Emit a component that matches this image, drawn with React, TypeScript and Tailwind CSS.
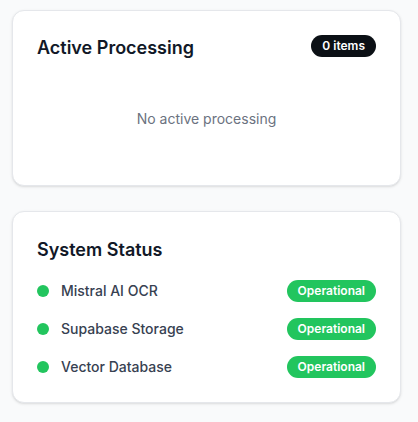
const services = ['Mistral AI OCR', 'Supabase Storage', 'Vector Database'];

function Card({ children }: { children: React.ReactNode }) {
  return (
    <div className="rounded-xl border border-[#e5e7eb] bg-white p-6 shadow-sm">{children}</div>
  );
}

export default function App() {
  return (
    <div
      className="min-h-screen bg-[#f9fafb] pt-[10px] pb-5"
      style={{ fontFamily: 'Inter, "Noto Sans", sans-serif' }}
    >
      <div className="ml-3 w-[389px] flex flex-col gap-[25px]">
        <Card>
          <div className="flex items-center justify-between mb-5">
            <h2 className="text-lg leading-7 font-semibold text-[#111827] -mt-[1px] -mb-[5px]">Active Processing</h2>
            <span className="rounded-full border border-transparent bg-[#0b1015] px-2.5 py-0.5 text-xs font-semibold text-white">
              0 items
            </span>
          </div>
          <div className="py-8 text-center text-sm leading-5 text-[#6b7280]">No active processing</div>
        </Card>

        <Card>
          <h2 className="text-lg leading-7 font-semibold text-[#111827] mb-4">System Status</h2>
          <div className="flex flex-col gap-4">
            {services.map((name) => (
              <div key={name} className="flex items-center justify-between">
                <div className="flex items-center gap-3">
                  <span className="h-3 w-3 rounded-full bg-[#22c55e]" />
                  <span className="text-sm leading-5 font-medium text-[#374151]">{name}</span>
                </div>
                <span className="rounded-full border border-transparent bg-[#22c55e] px-2.5 py-0.5 text-xs font-semibold text-white">
                  Operational
                </span>
              </div>
            ))}
          </div>
        </Card>
      </div>
    </div>
  );
}
